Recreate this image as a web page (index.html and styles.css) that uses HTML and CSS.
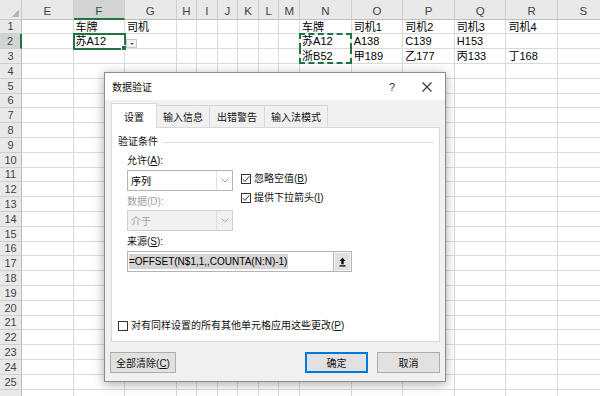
FILE: index.html
```html
<!DOCTYPE html>
<html lang="zh-CN">
<head>
  <meta charset="UTF-8" />
  <title>数据验证</title>
  <link rel="stylesheet" href="styles.css">
</head>
<body>
  <div class="sheet" id="sheet"></div>

  <div class="dialog">
    <div class="titlebar">
      <span class="title">数据验证</span>
      <span class="help">?</span>
      <span class="close">
        <svg width="10" height="10" viewBox="0 0 10 10"><path d="M0.5 0.5L9.5 9.5M9.5 0.5L0.5 9.5" stroke="#333" stroke-width="1.1" fill="none"/></svg>
      </span>
    </div>
    <div class="tabs">
      <div class="tab active">设置</div>
      <div class="tab t2">输入信息</div>
      <div class="tab t3">出错警告</div>
      <div class="tab t4">输入法模式</div>
    </div>
    <div class="panel">
      <div class="legend"><span>验证条件</span><i></i></div>
      <div class="criteria">
        <div class="col-left">
          <div class="label">允许(<u>A</u>):</div>
          <div class="select">
            <span>序列</span>
            <b class="arrow"><svg width="8" height="5" viewBox="0 0 8 5"><path d="M0.5 0.5L4 4L7.5 0.5" stroke="#9a9a9a" fill="none"/></svg></b>
          </div>
          <div class="label off gap">数据(D):</div>
          <div class="select disabled">
            <span>介于</span>
            <b class="arrow"><svg width="8" height="5" viewBox="0 0 8 5"><path d="M0.5 0.5L4 4L7.5 0.5" stroke="#a8a8a8" fill="none"/></svg></b>
          </div>
        </div>
        <div class="col-right">
          <div class="check">
            <span class="box"><svg width="8" height="8" viewBox="0 0 8 8"><path d="M0.8 4.2L3 6.4L7.3 1.2" stroke="#222" stroke-width="0.9" fill="none"/></svg></span>
            忽略空值(<u>B</u>)
          </div>
          <div class="check">
            <span class="box"><svg width="8" height="8" viewBox="0 0 8 8"><path d="M0.8 4.2L3 6.4L7.3 1.2" stroke="#222" stroke-width="0.9" fill="none"/></svg></span>
            提供下拉箭头(<u>I</u>)
          </div>
        </div>
      </div>
      <div class="label gap source-label">来源(<u>S</u>):</div>
      <div class="source">
        <div class="field"><span class="sel">=OFFSET(N$1,1,,COUNTA(N:N)-1)</span></div>
        <div class="pick">
          <svg width="7" height="10" viewBox="0 0 7 10"><path d="M3.5 0.5L0.5 4H2.3V7.3H4.7V4H6.5Z" fill="#111"/><rect x="0.5" y="8.2" width="6" height="1.4" fill="#111"/></svg>
        </div>
      </div>
      <div class="check apply">
        <span class="box"></span>
        对有同样设置的所有其他单元格应用这些更改(<u>P</u>)
      </div>
    </div>
    <div class="buttons">
      <button class="btn wide">全部清除(<u>C</u>)</button>
      <span class="spacer"></span>
      <button class="btn primary">确定</button>
      <button class="btn">取消</button>
    </div>
  </div>

  <script>
    const cols = ['E', 'F', 'G', 'H', 'I', 'J', 'K', 'L', 'M', 'N', 'O', 'P', 'Q', 'R', 'S'];
    const data = {
      F1: '车牌', G1: '司机', N1: '车牌', O1: '司机1', P1: '司机2', Q1: '司机3', R1: '司机4',
      F2: '苏A12', N2: '苏A12', O2: 'A138', P2: 'C139', Q2: 'H153',
      N3: '浙B52', O3: '甲189', P3: '乙177', Q3: '丙133', R3: '丁168'
    };
    const sheet = document.getElementById('sheet');
    let html = '<div class="corner"></div>';
    cols.forEach(c => {
      html += `<div class="colhead${c === 'F' ? ' current' : ''}">${c}</div>`;
    });
    for (let r = 1; r <= 26; r++) {
      html += `<div class="rowhead${r === 2 ? ' current' : ''}">${r <= 25 ? r : ''}</div>`;
      cols.forEach(c => {
        const key = c + r;
        let cls = 'cell';
        if (key === 'F2') cls += ' active';
        if (key === 'N2') cls += ' copy-top';
        if (key === 'N3') cls += ' copy-bottom';
        let extra = '';
        if (key === 'F2') extra = '<span class="handle"></span><span class="drop"></span>';
        html += `<div class="${cls}">${data[key] || ''}${extra}</div>`;
      });
    }
    sheet.innerHTML = html;
  </script>
</body>
</html>
```

FILE: styles.css
```css
body {
  margin: 0;
  width: 600px;
  height: 396px;
  overflow: hidden;
  position: relative;
  background: #fff;
  font-family: 'Liberation Sans', 'Noto Sans CJK SC', sans-serif;
  color: #000;
}

/* spreadsheet */
.sheet {
  display: grid;
  grid-template-columns: 22px repeat(3, 51.5px) repeat(6, 20.6px) repeat(6, 51.6px);
  grid-template-rows: 19.6px;
  grid-auto-rows: 14.8px;
  font-size: 11px;
}
.corner, .colhead, .rowhead {
  background: #e9e9e9;
  color: #444;
  box-sizing: border-box;
}
.corner {
  border-right: 1px solid #c8c8c8;
  border-bottom: 1px solid #c8c8c8;
  background: linear-gradient(135deg, #e9e9e9 60%, #b8b8b8 60%) no-repeat right 2px bottom 2px / 9px 9px, #e9e9e9;
}
.colhead {
  border-right: 1px solid #cfcfcf;
  border-bottom: 1px solid #bdbdbd;
  display: flex;
  align-items: flex-end;
  justify-content: center;
  padding-bottom: 2px;
  font-size: 11.5px;
}
.colhead.current {
  background: #d4d4d4;
  border-bottom: 2px solid #217346;
  padding-bottom: 1px;
  color: #1f5c3a;
}
.rowhead {
  border-right: 1px solid #bdbdbd;
  border-bottom: 1px solid #cfcfcf;
  display: flex;
  align-items: center;
  justify-content: center;
  font-size: 11px;
}
.rowhead.current {
  background: #d4d4d4;
  border-right: 2px solid #217346;
  color: #1f5c3a;
}
.cell {
  border-right: 1px solid #dadada;
  border-bottom: 1px solid #dadada;
  box-sizing: border-box;
  padding-left: 2px;
  line-height: 14px;
  white-space: nowrap;
  position: relative;
}
.cell.active {
  outline: 2px solid #217346;
  outline-offset: -1px;
  z-index: 2;
}
.cell .handle {
  position: absolute;
  right: -3px;
  bottom: -3px;
  width: 4px;
  height: 4px;
  background: #217346;
  border: 1px solid #fff;
}
.cell .drop {
  position: absolute;
  left: 100%;
  margin-left: 2px;
  bottom: 0;
  width: 11px;
  height: 9px;
  background: #f2f2f2;
  border: 1px solid #c6c6c6;
  box-sizing: border-box;
}
.cell .drop::after {
  content: '';
  position: absolute;
  left: 3px;
  top: 3px;
  border-left: 2px solid transparent;
  border-right: 2px solid transparent;
  border-top: 2px solid #555;
}
.copy-top::after, .copy-bottom::after {
  content: '';
  position: absolute;
  left: -1px;
  right: -1px;
  border: 2px dashed #217346;
  pointer-events: none;
}
.copy-top::after {
  top: -1px;
  bottom: -1px;
  border-bottom: none;
}
.copy-bottom::after {
  top: -1px;
  bottom: -1px;
  border-top: none;
}

/* dialog window */
.dialog {
  position: absolute;
  left: 104px;
  top: 72px;
  width: 342px;
  height: 310px;
  box-sizing: border-box;
  background: #f0f0f0;
  border: 1px solid #8c8c8c;
  box-shadow: 0 2px 10px rgba(0, 0, 0, 0.35);
  font-size: 10px;
  display: flex;
  flex-direction: column;
  z-index: 10;
}
.titlebar {
  height: 27px;
  background: #fff;
  display: flex;
  align-items: center;
  padding-left: 7px;
}
.title {
  flex: 1;
  color: #111;
}
.help {
  width: 34px;
  text-align: center;
  font-size: 11px;
  color: #333;
}
.close {
  width: 36px;
  display: flex;
  justify-content: center;
}
.tabs {
  display: flex;
  align-items: flex-end;
  height: 24px;
  margin: 3px 0 0 6px;
}
.tab {
  height: 22px;
  box-sizing: border-box;
  border: 1px solid #d9d9d9;
  border-bottom: none;
  border-left: none;
  display: flex;
  align-items: center;
  justify-content: center;
  color: #111;
  width: 53px;
}
.tab.active {
  height: 25px;
  width: 46px;
  background: #fff;
  border-left: 1px solid #d9d9d9;
  margin-bottom: -1px;
  position: relative;
  z-index: 1;
}
.tab.t3 { width: 55px; }
.tab.t4 { width: 63px; }

.panel {
  height: 215px;
  margin: 0 5px 0 6px;
  box-sizing: border-box;
  background: #fff;
  border: 1px solid #d9d9d9;
  padding: 8px 5px 0 6px;
}
.legend {
  display: flex;
  align-items: center;
  line-height: 12px;
  color: #111;
}
.legend i {
  flex: 1;
  height: 1px;
  background: #dcdcdc;
  margin-left: 4px;
}
.criteria {
  display: flex;
  gap: 8px;
  margin: 7px 0 0 9px;
}
.col-left {
  width: 106px;
  display: flex;
  flex-direction: column;
}
.label {
  line-height: 12px;
  color: #111;
}
.label.off {
  color: #a0a0a0;
}
.label.gap {
  margin-top: 5px;
}
.select {
  margin-top: 3px;
  height: 21px;
  box-sizing: border-box;
  border: 1px solid #b4b4b4;
  display: flex;
  align-items: center;
  padding-left: 3px;
  background: #fff;
}
.select span {
  flex: 1;
}
.select .arrow {
  width: 15px;
  height: 100%;
  border-left: 1px solid #e0e0e0;
  display: flex;
  align-items: center;
  justify-content: center;
}
.select.disabled {
  margin-top: 2px;
  background: #f0f0f0;
  border-color: #d0d0d0;
  color: #a0a0a0;
}
.select.disabled .arrow {
  border-left-color: #dedede;
}
.col-right {
  padding-top: 18px;
  display: flex;
  flex-direction: column;
  gap: 7px;
}
.check {
  display: flex;
  align-items: center;
  line-height: 12px;
  color: #111;
}
.check .box {
  width: 10px;
  height: 10px;
  box-sizing: border-box;
  border: 1px solid #333;
  margin-right: 3px;
  display: flex;
  align-items: center;
  justify-content: center;
  background: #fff;
}
.source-label {
  margin-left: 9px;
}
.source {
  display: flex;
  margin: 3px 0 0 9px;
  height: 21px;
}
.field {
  width: 206px;
  box-sizing: border-box;
  border: 1px solid #b4b4b4;
  border-right: none;
  padding: 2px 1px;
  display: flex;
  align-items: stretch;
}
.sel {
  background: #d4d4d4;
  line-height: 15px;
  padding-right: 1px;
  color: #000;
}
.pick {
  width: 19px;
  box-sizing: border-box;
  border: 1px solid #b4b4b4;
  background: #e1e1e1;
  display: flex;
  align-items: center;
  justify-content: center;
  box-shadow: inset 0 0 0 1px #f4f4f4;
}
.check.apply {
  margin-top: 48px;
}

.buttons {
  display: flex;
  gap: 9px;
  margin: 10px 5px 0 5px;
}
.spacer {
  flex: 1;
}
.btn {
  height: 21px;
  width: 63px;
  padding: 0;
  font: inherit;
  color: #111;
  background: #e1e1e1;
  border: 1px solid #adadad;
}
.btn.wide {
  width: 66px;
}
.btn.primary {
  border-color: #0078d7;
  box-shadow: inset 0 0 0 1px #0078d7;
}
```
